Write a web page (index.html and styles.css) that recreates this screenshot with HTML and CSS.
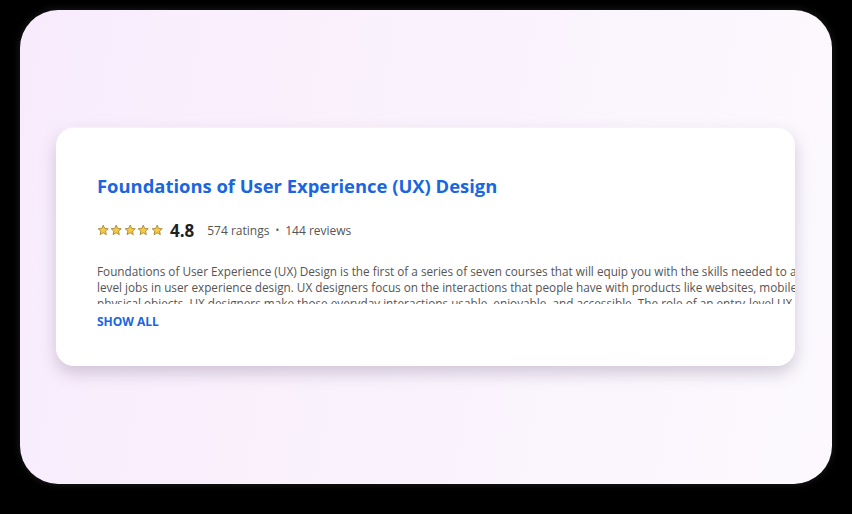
FILE: index.html
```html
<!DOCTYPE html>
<html lang="en">
<head>
<meta charset="utf-8">
<title>Foundations of User Experience (UX) Design</title>
<link rel="stylesheet" href="styles.css">
</head>
<body>
<div class="frame">
  <div class="card">
    <h1 class="title">Foundations of User Experience (UX) Design</h1>
    <div class="rating-row">
      <div class="stars">
        <svg class="star" viewBox="0 0 24 24"><path d="M12 2.2l2.9 6.3 6.9.7-5.2 4.6 1.5 6.8L12 17.1l-6.1 3.5 1.5-6.8L2.2 9.2l6.9-.7z"/></svg>
        <svg class="star" viewBox="0 0 24 24"><path d="M12 2.2l2.9 6.3 6.9.7-5.2 4.6 1.5 6.8L12 17.1l-6.1 3.5 1.5-6.8L2.2 9.2l6.9-.7z"/></svg>
        <svg class="star" viewBox="0 0 24 24"><path d="M12 2.2l2.9 6.3 6.9.7-5.2 4.6 1.5 6.8L12 17.1l-6.1 3.5 1.5-6.8L2.2 9.2l6.9-.7z"/></svg>
        <svg class="star" viewBox="0 0 24 24"><path d="M12 2.2l2.9 6.3 6.9.7-5.2 4.6 1.5 6.8L12 17.1l-6.1 3.5 1.5-6.8L2.2 9.2l6.9-.7z"/></svg>
        <svg class="star" viewBox="0 0 24 24"><path d="M12 2.2l2.9 6.3 6.9.7-5.2 4.6 1.5 6.8L12 17.1l-6.1 3.5 1.5-6.8L2.2 9.2l6.9-.7z"/></svg>
      </div>
      <span class="score">4.8</span>
      <span class="meta">574 ratings</span>
      <span class="dot">•</span>
      <span class="meta">144 reviews</span>
    </div>
    <p class="desc">Foundations of User Experience (UX) Design is the first of a series of seven courses that will equip you with the skills needed to apply to entry-level jobs in user experience design. UX designers focus on the interactions that people have with products like websites, mobile apps, and physical objects. UX designers make those everyday interactions usable, enjoyable, and accessible. The role of an entry-level UX designer might include empathizing with users, defining their pain points, coming up with ideas for design solutions, creating wireframes, prototypes, and mockups, and testing designs to get feedback.</p>
    <a class="show-all" href="#">SHOW ALL</a>
  </div>
</div>
</body>
</html>
```
FILE: styles.css
```css
* { box-sizing: border-box; }
html, body { margin: 0; padding: 0; }
body {
  background: #000;
  width: 852px;
  height: 514px;
  overflow: hidden;
  font-family: "Open Sans", "Noto Sans", sans-serif;
}
.frame {
  margin: 10px 0 0 20px;
  width: 812px;
  height: 474px;
  border-radius: 38px;
  background: linear-gradient(100deg, #f8ecfc 0%, #faf3fd 55%, #fcf9fd 100%);
  box-shadow: 0 0 6px 2px rgba(255, 255, 255, 0.08);
  padding: 118px 0 0 36px;
}
.card {
  width: 739px;
  height: 238px;
  background: #fff;
  border-radius: 18px;
  overflow: hidden;
  box-shadow: 0 7px 16px rgba(90, 70, 110, 0.26), 0 -1px 2px rgba(255,255,255,0.9);
  padding: 45px 0 0 41px;
}
.title {
  margin: 0;
  font-size: 18.4px;
  line-height: 25px;
  font-weight: 700;
  color: #1a66e0;
  white-space: nowrap;
}
.rating-row {
  display: flex;
  align-items: center;
  margin-top: 20px;
  height: 24px;
  white-space: nowrap;
}
.stars { display: flex; gap: 1px; }
.star {
  width: 12.4px;
  height: 12.4px;
  fill: #f6c844;
  stroke: #8a6a10;
  stroke-width: 1.3;
  stroke-linejoin: round;
}
.score {
  margin-left: 7px;
  font-size: 17px;
  font-weight: 700;
  color: #1f1f1f;
}
.meta {
  font-size: 12px;
  color: #555;
}
.score + .meta { margin-left: 13px; }
.dot {
  font-size: 10px;
  color: #555;
  margin: 0 6px;
}
.desc {
  margin: 21px 0 0;
  width: 785px;
  height: 41px;
  overflow: hidden;
  font-size: 11.75px;
  line-height: 16px;
  color: #555;
}
.show-all {
  display: block;
  margin-top: 10px;
  font-size: 12px;
  line-height: 16px;
  font-weight: 700;
  color: #1a66e0;
  text-decoration: none;
}
```
